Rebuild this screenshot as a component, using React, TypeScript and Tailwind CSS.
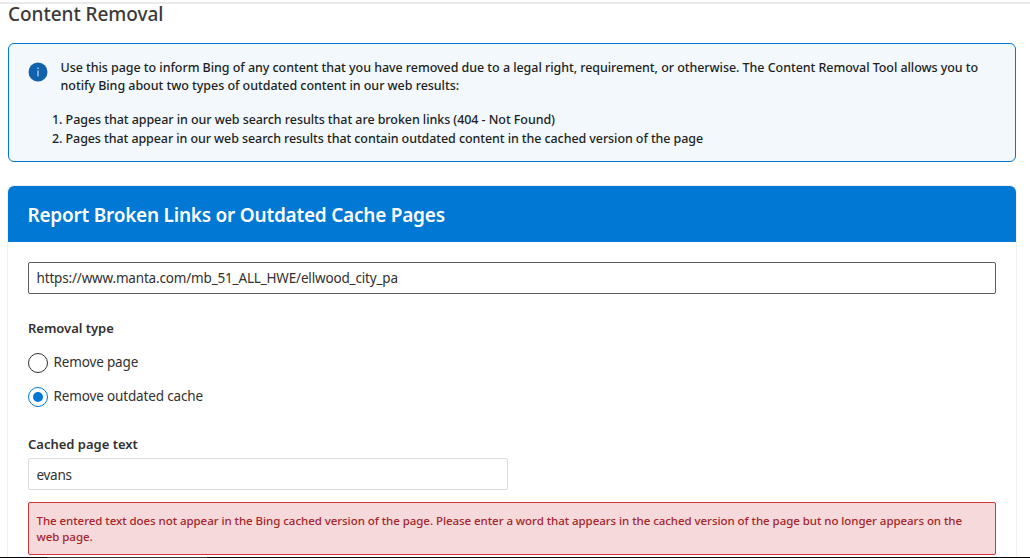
import { useState } from "react";

const removalTypes = [
  { id: "page", label: "Remove page" },
  { id: "cache", label: "Remove outdated cache" },
];

function InfoBadge() {
  return (
    <svg className="mt-[18px] ml-[19px] h-5 w-5 shrink-0" viewBox="0 0 20 20">
      <circle cx="10" cy="10" r="9.5" fill="#0f62ab" />
      <rect x="9.4" y="8.4" width="1.2" height="6" fill="#c5d9eb" />
      <rect x="9.3" y="5.6" width="1.4" height="1.4" fill="#c5d9eb" />
    </svg>
  );
}

export default function App() {
  const [url, setUrl] = useState("https://www.manta.com/mb_51_ALL_HWE/ellwood_city_pa");
  const [cachedText, setCachedText] = useState("evans");
  const [removalType, setRemovalType] = useState("cache");

  return (
    <div className="flex h-[558px] flex-col overflow-hidden bg-white font-['Noto_Sans','Open_Sans',sans-serif] text-[#323130]">
      <div className="mt-[2px] h-[2px] shrink-0 bg-[#eaeaea]" />

      <main className="flex min-h-0 flex-1 flex-col px-[7px]">
        <h1 className="ml-px h-[39px] shrink-0 text-[19px] leading-[21px] font-medium tracking-[-0.05px] whitespace-nowrap text-[#3b3a39]">
          Content Removal
        </h1>

        {/* Notice */}
        <section className="mx-px mr-[7px] flex h-[119px] w-[1008px] shrink-0 rounded-md border border-[#0078d4] bg-[#f3f8fd] text-[12.5px] font-medium whitespace-nowrap text-[#201f1e]">
          <InfoBadge />
          <div className="pt-[15px]">
            <p className="ml-[12.5px] leading-[18px] tracking-[-0.057px]">
              Use this page to inform Bing of any content that you have removed due to a legal right, requirement, or otherwise. The Content Removal Tool allows you to
            </p>
            <p className="ml-[12.5px] leading-[18px] tracking-[-0.045px]">
              notify Bing about two types of outdated content in our web results:
            </p>
            <ol className="mt-[15px] ml-[4px] leading-[19px]">
              <li className="tracking-[-0.07px]">1. Pages that appear in our web search results that are broken links (404 - Not Found)</li>
              <li className="tracking-[-0.09px]">2. Pages that appear in our web search results that contain outdated content in the cached version of the page</li>
            </ol>
          </div>
        </section>

        {/* Report form */}
        <section className="mt-[23px] h-[500px] w-[1010px] shrink-0 rounded-t-md border border-[#f1f1f1]">
          <h2 className="h-[56px] rounded-t-md bg-[#0078d4] pl-[19.5px] text-[19px] leading-[58px] font-semibold tracking-[-0.23px] whitespace-nowrap text-white">
            Report Broken Links or Outdated Cache Pages
          </h2>

          <div className="flex flex-col items-start px-5 pt-5">
            <input
              value={url}
              onChange={(e) => setUrl(e.target.value)}
              className="h-8 w-full rounded-[2px] border border-[#605e5c] px-[7.5px] text-[13.5px] tracking-[-0.17px] outline-none"
            />

            <h3 className="mt-[24px] text-[13px] leading-5 font-semibold tracking-[-0.03px]">Removal type</h3>
            <div className="mt-[15px] flex flex-col gap-[14px]">
              {removalTypes.map((type) => (
                <label key={type.id} className="flex h-5 items-center gap-[5.5px]">
                  <input
                    type="radio"
                    name="removal"
                    className="sr-only"
                    checked={removalType === type.id}
                    onChange={() => setRemovalType(type.id)}
                  />
                  <span
                    className={`flex h-5 w-5 items-center justify-center rounded-full border ${
                      removalType === type.id ? "border-[#0078d4]" : "border-[#323130]"
                    }`}
                  >
                    {removalType === type.id && <span className="h-[10px] w-[10px] rounded-full bg-[#0078d4]" />}
                  </span>
                  <span className="pb-[2px] text-[13.5px] leading-5 tracking-[-0.15px] whitespace-nowrap">{type.label}</span>
                </label>
              ))}
            </div>

            <h3 className="mt-[27px] text-[13px] leading-5 font-semibold">Cached page text</h3>
            <input
              value={cachedText}
              onChange={(e) => setCachedText(e.target.value)}
              className="mt-1 h-8 w-[480px] rounded-[2px] border border-[#dcdcdc] px-[7.5px] pt-[2px] text-[13.5px] tracking-[-0.3px] outline-none"
            />

            <div className="mt-3 h-[53px] w-full rounded-[2px] border border-[#d13438] bg-[#f6d9da] px-[7.5px] pt-[10px] text-[11.5px] leading-4 font-medium tracking-[-0.053px] whitespace-nowrap text-[#a4262c]">
              <p>
                The entered text does not appear in the Bing cached version of the page. Please enter a word that appears in the cached version of the page but no longer appears on the
              </p>
              <p>web page.</p>
            </div>
          </div>
        </section>
      </main>

      <footer className="flex h-px shrink-0 bg-[#05050f]">
        <div className="ml-[47px] w-[160px] bg-[#30343c]" />
      </footer>
    </div>
  );
}
